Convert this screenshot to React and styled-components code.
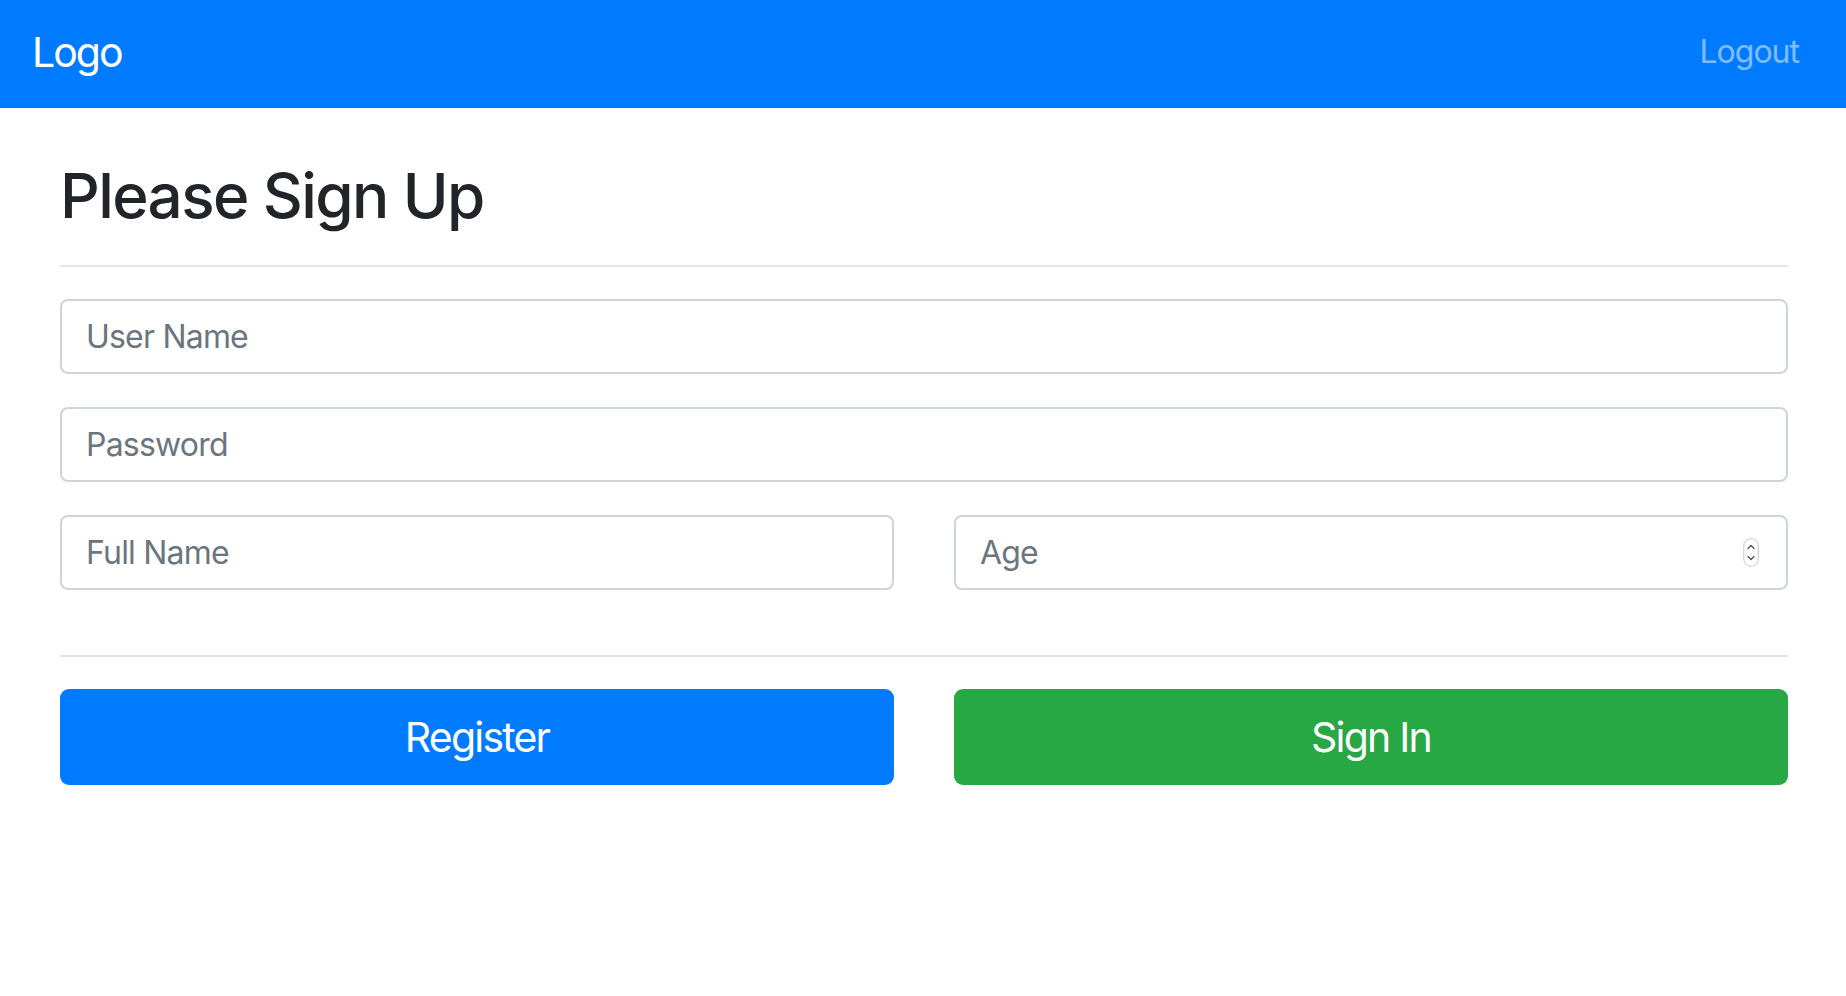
import styled, { createGlobalStyle } from "styled-components";

const GlobalStyle = createGlobalStyle`
  * {
    box-sizing: border-box;
  }
  body {
    margin: 0;
    background: #ffffff;
    font-family: Inter, "Noto Sans", "Liberation Sans", sans-serif;
    color: #212529;
  }
`;

const Navbar = styled.nav`
  height: 108px;
  background-color: #007bff;
  display: flex;
  align-items: center;
  justify-content: space-between;
  padding: 0 47px 3px 32px;
`;

const Brand = styled.a`
  font-size: 41px;
  line-height: 1.2;
  letter-spacing: -2px;
  color: #ffffff;
  text-decoration: none;
`;

const NavLink = styled.a`
  font-size: 32px;
  line-height: 1.2;
  letter-spacing: -1px;
  color: rgba(255, 255, 255, 0.5);
  text-decoration: none;
  cursor: pointer;
`;

const Main = styled.main`
  padding: 50px 58px 0 60px;
`;

const Title = styled.h2`
  margin: 0;
  font-size: 62px;
  font-weight: 500;
  line-height: 75px;
  letter-spacing: -1.6px;
  color: #212529;
`;

const Divider = styled.hr`
  margin: ${(p) => (p.$wide ? "65px 0 32px" : "32px 0")};
  border: 0;
  border-top: 2px solid rgba(0, 0, 0, 0.1);
`;

const Form = styled.form`
  display: flex;
  flex-direction: column;
  gap: 33px;
`;

const Row = styled.div`
  display: grid;
  grid-template-columns: 1fr 1fr;
  gap: 60px;
`;

const Input = styled.input`
  width: 100%;
  height: 75px;
  padding: 0 24px;
  font-family: inherit;
  font-size: 32px;
  letter-spacing: -0.8px;
  color: #495057;
  background: #ffffff;
  border: 2px solid #ced4da;
  border-radius: 8px;
  outline: none;

  &::placeholder {
    color: #6c757d;
  }
`;

const NumberBox = styled.div`
  display: flex;
  align-items: center;
  height: 75px;
  padding: 0 27px 0 24px;
  border: 2px solid #ced4da;
  border-radius: 8px;
  background: #ffffff;
`;

const BareInput = styled.input`
  flex: 1;
  min-width: 0;
  height: 100%;
  padding: 0;
  border: 0;
  outline: none;
  font-family: inherit;
  font-size: 32px;
  letter-spacing: -0.8px;
  color: #495057;
  background: transparent;

  &::placeholder {
    color: #6c757d;
  }
`;

const Button = styled.button`
  height: 96px;
  border: 0;
  border-radius: 9px;
  font-family: inherit;
  font-size: 41px;
  letter-spacing: -1.8px;
  color: #ffffff;
  background-color: ${(p) => (p.$variant === "success" ? "#28a745" : "#007bff")};
  cursor: pointer;
`;

const Spinner = () => (
  <svg width="16" height="29" viewBox="0 0 16 29">
    <rect x="0.75" y="0.75" width="14.5" height="27.5" rx="7.25" fill="#fff" stroke="#c9c9c9" strokeWidth="1" />
    <path d="M5 10.5 L8 7.5 L11 10.5" fill="none" stroke="#555" strokeWidth="1.4" strokeLinecap="round" strokeLinejoin="round" />
    <path d="M5 18.5 L8 21.5 L11 18.5" fill="none" stroke="#555" strokeWidth="1.4" strokeLinecap="round" strokeLinejoin="round" />
  </svg>
);

const App = () => {
  return (
    <>
      <GlobalStyle />
      <Navbar>
        <Brand>Logo</Brand>
        <NavLink>Logout</NavLink>
      </Navbar>

      <Main>
        <Title>Please Sign Up</Title>
        <Divider />

        <Form onSubmit={(e) => e.preventDefault()}>
          <Input type="text" placeholder="User Name" />
          <Input type="password" placeholder="Password" />
          <Row>
            <Input type="text" placeholder="Full Name" />
            <NumberBox>
              <BareInput type="text" inputMode="numeric" placeholder="Age" />
              <Spinner />
            </NumberBox>
          </Row>
        </Form>

        <Divider $wide />

        {/* Actions */}
        <Row>
          <Button>Register</Button>
          <Button $variant="success">Sign In</Button>
        </Row>
      </Main>
    </>
  );
};

export default App;
